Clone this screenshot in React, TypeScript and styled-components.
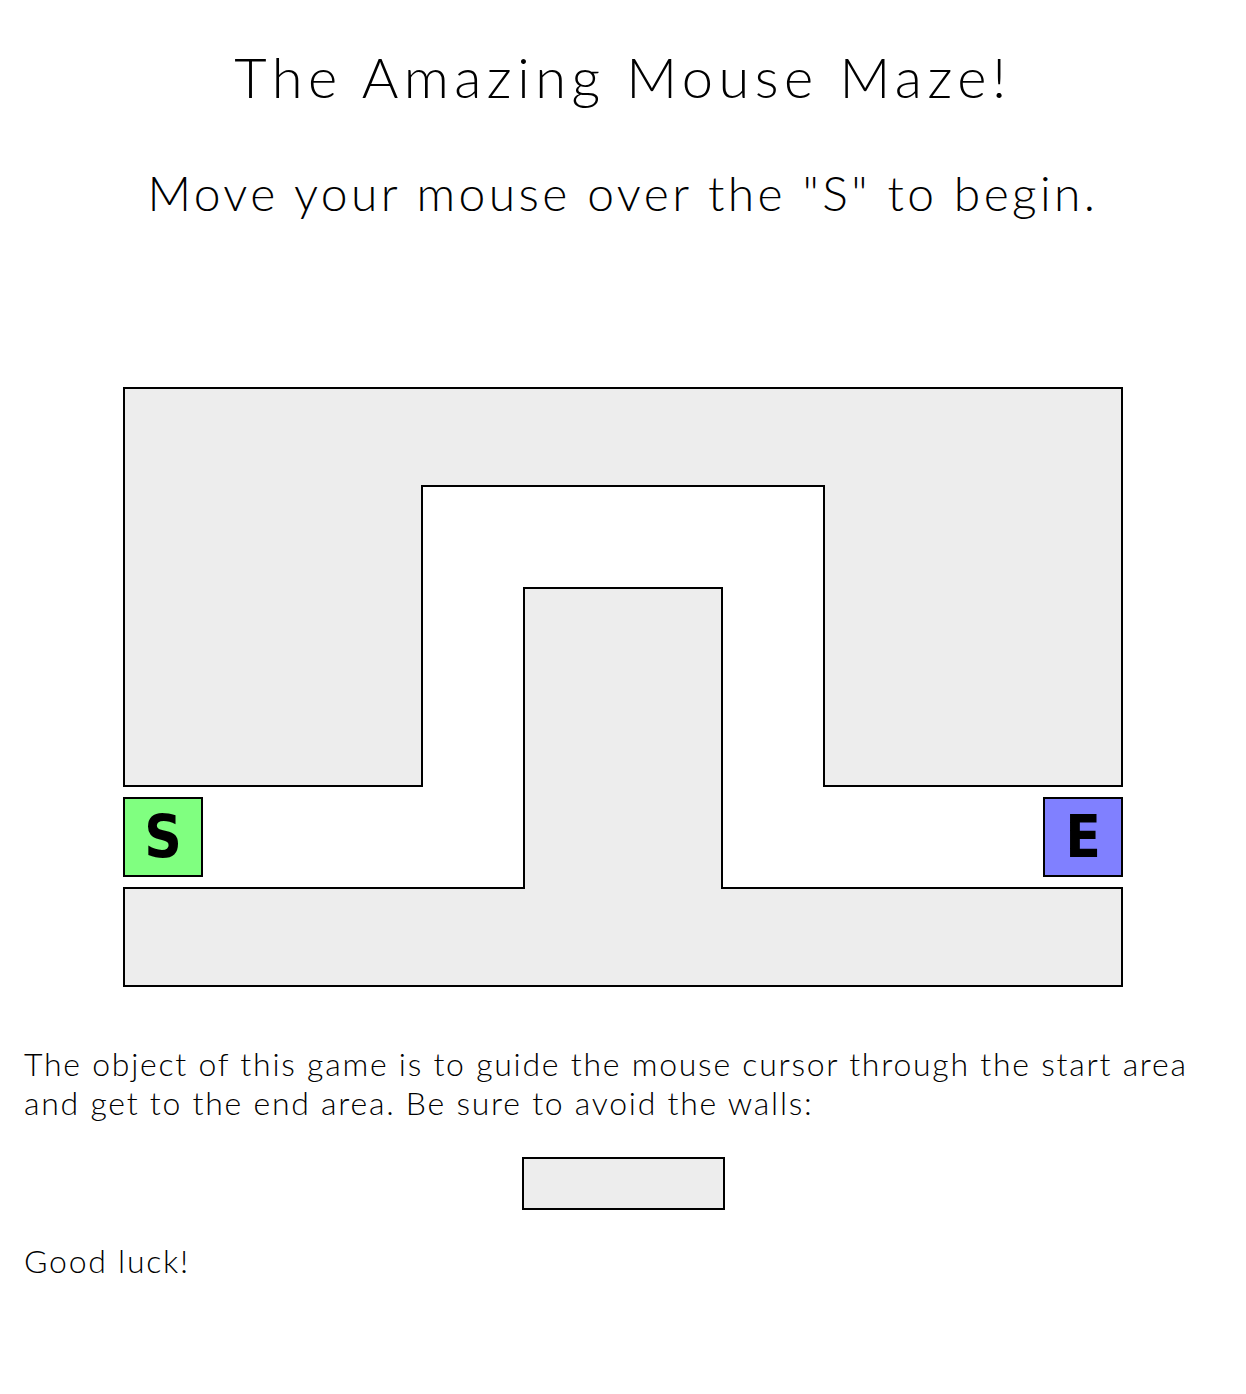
import styled, { createGlobalStyle } from 'styled-components';

const GlobalStyle = createGlobalStyle`
  html, body {
    margin: 0;
    padding: 0;
    background: #fff;
    color: #000;
  }
  body {
    font-family: Lato, "Open Sans", sans-serif;
  }
`;

const App = () => {
  return (
    <Page>
      <GlobalStyle />
      <Title>The Amazing Mouse Maze!</Title>
      <Subtitle>Move your mouse over the "S" to begin.</Subtitle>
      <Maze>
        <Walls viewBox="0 0 1000 600" width="1000" height="600">
          <path d="M1 1 H999 V399 H701 V99 H299 V399 H1 Z" />
          <path d="M401 201 H599 V501 H999 V599 H1 V501 H401 Z" />
        </Walls>
        <Zone $side="start">S</Zone>
        <Zone $side="end">E</Zone>
      </Maze>
      <Text>
        The object of this game is to guide the mouse cursor through the start area and get to the end area. Be
        sure to avoid the walls:
      </Text>
      <Sample />
      <Text $gap={31}>Good luck!</Text>
    </Page>
  );
};

export default App;

const Page = styled.main`
  display: flex;
  flex-direction: column;
  padding: 0 24px 80px;
`;

const Title = styled.h1`
  margin: 43px 0 0;
  font-size: 56px;
  font-weight: 300;
  line-height: 1.2;
  letter-spacing: 5.5px;
  text-align: center;
`;

const Subtitle = styled.h2`
  margin: 54px 0 0;
  font-size: 48px;
  font-weight: 300;
  line-height: 1.2;
  letter-spacing: 3.4px;
  text-align: center;
`;

const Maze = styled.div`
  position: relative;
  align-self: center;
  width: 1000px;
  height: 600px;
  margin-top: 165px;
`;

const Walls = styled.svg`
  display: block;
  path {
    fill: #ededed;
    stroke: #000;
    stroke-width: 2;
  }
`;

const Zone = styled.div<{ $side: 'start' | 'end' }>`
  position: absolute;
  top: 410px;
  ${({ $side }) => ($side === 'start' ? 'left: 0;' : 'right: 0;')}
  box-sizing: border-box;
  width: 80px;
  height: 80px;
  border: 2px solid #000;
  background: ${({ $side }) => ($side === 'start' ? '#80ff80' : '#8080ff')};
  display: flex;
  align-items: center;
  justify-content: center;
  font-family: "DejaVu Sans Condensed", "DejaVu Sans", sans-serif;
  font-weight: 700;
  font-size: 58px;
  line-height: 1;
`;

const Text = styled.p<{ $gap?: number }>`
  margin: ${({ $gap }) => $gap ?? 57}px 0 0;
  font-size: 32px;
  font-weight: 300;
  line-height: 39px;
  letter-spacing: 1.75px;
`;

const Sample = styled.div`
  align-self: center;
  box-sizing: border-box;
  width: 203px;
  height: 53px;
  margin-top: 35px;
  border: 2px solid #000;
  background: #ededed;
`;
